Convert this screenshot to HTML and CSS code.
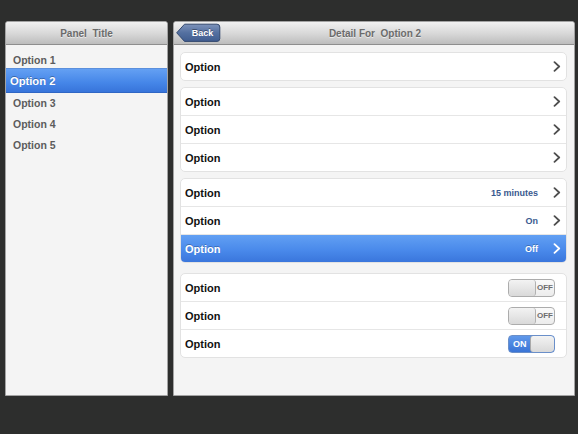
FILE: index.html
```html
<!DOCTYPE html>
<html>
<head>
<meta charset="utf-8">
<link rel="stylesheet" href="styles.css">
</head>
<body>
<div class="app">
  <aside class="panel master">
    <header class="bar">
      <span class="bar-title">Panel  Title</span>
    </header>
    <ul class="menu">
      <li class="menu-item">Option 1</li>
      <li class="menu-item is-selected">Option 2</li>
      <li class="menu-item">Option 3</li>
      <li class="menu-item">Option 4</li>
      <li class="menu-item">Option 5</li>
    </ul>
  </aside>
  <section class="panel detail">
    <header class="bar bar-detail">
      <div class="back">
        <svg class="back-shape" width="45" height="20" viewBox="0 0 45 20">
          <defs>
            <linearGradient id="bg" x1="0" y1="0" x2="0" y2="1">
              <stop offset="0" stop-color="#7d93bb"/>
              <stop offset="0.5" stop-color="#5470a0"/>
              <stop offset="1" stop-color="#405d8f"/>
            </linearGradient>
          </defs>
          <path d="M0.7,9.8 L8.5,1.2 H41 Q43.8,1.2 43.8,4 V15.6 Q43.8,18.4 41,18.4 H8.5 Z" fill="url(#bg)" stroke="#33496f" stroke-width="1"/>
        </svg>
        <span class="back-label">Back</span>
      </div>
      <span class="bar-title">Detail For  Option 2</span>
      <span class="bar-spacer"></span>
    </header>
    <div class="groups">
      <div class="group">
        <div class="row"><span class="row-label">Option</span><svg class="chev" width="8" height="11" viewBox="0 0 8 11"><polyline points="1.5,1.2 6.2,5.5 1.5,9.8"/></svg></div>
      </div>
      <div class="group">
        <div class="row"><span class="row-label">Option</span><svg class="chev" width="8" height="11" viewBox="0 0 8 11"><polyline points="1.5,1.2 6.2,5.5 1.5,9.8"/></svg></div>
        <div class="row"><span class="row-label">Option</span><svg class="chev" width="8" height="11" viewBox="0 0 8 11"><polyline points="1.5,1.2 6.2,5.5 1.5,9.8"/></svg></div>
        <div class="row"><span class="row-label">Option</span><svg class="chev" width="8" height="11" viewBox="0 0 8 11"><polyline points="1.5,1.2 6.2,5.5 1.5,9.8"/></svg></div>
      </div>
      <div class="group">
        <div class="row"><span class="row-label">Option</span><span class="row-value">15 minutes</span><svg class="chev" width="8" height="11" viewBox="0 0 8 11"><polyline points="1.5,1.2 6.2,5.5 1.5,9.8"/></svg></div>
        <div class="row"><span class="row-label">Option</span><span class="row-value">On</span><svg class="chev" width="8" height="11" viewBox="0 0 8 11"><polyline points="1.5,1.2 6.2,5.5 1.5,9.8"/></svg></div>
        <div class="row is-selected"><span class="row-label">Option</span><span class="row-value">Off</span><svg class="chev" width="8" height="11" viewBox="0 0 8 11"><polyline points="1.5,1.2 6.2,5.5 1.5,9.8"/></svg></div>
      </div>
      <div class="group group-switches">
        <div class="row"><span class="row-label">Option</span><div class="switch"><span class="switch-knob"></span><span class="switch-text">OFF</span></div></div>
        <div class="row"><span class="row-label">Option</span><div class="switch"><span class="switch-knob"></span><span class="switch-text">OFF</span></div></div>
        <div class="row"><span class="row-label">Option</span><div class="switch is-on"><span class="switch-text">ON</span><span class="switch-knob"></span></div></div>
      </div>
    </div>
  </section>
</div>
</body>
</html>
```
FILE: styles.css
```css
* { box-sizing: border-box; }
html, body { margin: 0; padding: 0; }
body {
  background: #2d2e2d;
  font-family: "Liberation Sans", Arial, Helvetica, sans-serif;
  width: 578px;
  height: 434px;
  overflow: hidden;
}
.app {
  display: flex;
  gap: 5px;
  padding: 21px 3px 0 5px;
  height: 396px;
}
.panel {
  background: #f4f4f4;
  border: 1px solid #a3a3a3;
  border-radius: 3px 3px 0 0;
  display: flex;
  flex-direction: column;
  overflow: hidden;
}
.master { width: 163px; flex: none; }
.detail { flex: 1; }

.bar {
  height: 23px;
  flex: none;
  background: linear-gradient(#f1f1f1 0%, #d9d9d9 50%, #bdbdbd 100%);
  border-bottom: 1px solid #8e8e8e;
  display: flex;
  align-items: center;
  justify-content: center;
}
.bar-title {
  white-space: pre;
  font-size: 10px;
  font-weight: bold;
  color: #6b6b6b;
  text-shadow: 0 1px 0 rgba(255,255,255,0.6);
}
.bar-detail {
  display: grid;
  grid-template-columns: 1fr auto 1fr;
  padding-left: 2px;
}
.back {
  position: relative;
  width: 45px;
  height: 20px;
  display: flex;
  align-items: center;
  padding-left: 9px;
}
.back-shape { position: absolute; left: 0; top: 0; }
.back-label {
  position: relative;
  width: 35px;
  text-align: center;
  font-size: 9px;
  font-weight: bold;
  color: #fff;
  text-shadow: 0 -1px 0 rgba(0,0,0,0.35);
}

.menu {
  list-style: none;
  margin: 0;
  padding: 5px 0 0;
}
.menu-item {
  height: 21px;
  display: flex;
  align-items: center;
  padding-left: 7px;
  padding-bottom: 2px;
  font-size: 10.5px;
  font-weight: bold;
  color: #5c5c5c;
}
.menu-item.is-selected {
  height: 25px;
  margin-top: -3px;
  padding-left: 4px;
  padding-bottom: 0;
  font-size: 11.2px;
  color: #fff;
  background: linear-gradient(#64a0f3, #4586e8 60%, #3774da);
  border-top: 1px solid #5b8fdc;
  border-bottom: 1px solid #2f66c4;
  text-shadow: 0 -1px 0 rgba(0,0,0,0.3);
}

.groups {
  display: flex;
  flex-direction: column;
  gap: 6px;
  padding: 7px 7px 0 6px;
}
.group {
  background: #fff;
  border: 1px solid #e2e2e2;
  border-radius: 5px;
  overflow: hidden;
}
.group-switches { margin-top: 4px; }
.row {
  height: 28px;
  display: flex;
  align-items: center;
  padding: 0 5px 0 4px;
  border-bottom: 1px solid #e6e6e6;
}
.row:last-child { border-bottom: none; height: 27px; }
.row-label {
  flex: 1;
  font-size: 11px;
  font-weight: bold;
  color: #111;
}
.row-value {
  font-size: 9px;
  font-weight: bold;
  color: #3a5a8f;
  margin-right: 15px;
}
.chev { flex: none; }
.chev polyline {
  fill: none;
  stroke: #4f4f4f;
  stroke-width: 1.8;
  stroke-linecap: round;
  stroke-linejoin: round;
}
.row.is-selected {
  background: linear-gradient(#62a0f3, #4a8aeb 55%, #3a76dc);
}
.row.is-selected .row-label,
.row.is-selected .row-value {
  color: #fff;
  text-shadow: 0 -1px 0 rgba(0,0,0,0.25);
}
.row.is-selected .chev polyline { stroke: #fff; }

.switch {
  width: 47px;
  height: 18px;
  margin-right: 6px;
  border: 1px solid #acacac;
  border-radius: 4px;
  display: flex;
  overflow: hidden;
  background: linear-gradient(#fafafa, #ececec);
}
.switch-knob {
  width: 27px;
  flex: none;
  background: linear-gradient(#f3f3f3, #d9d9d9);
  border-right: 1px solid #b1b1b1;
  border-radius: 3px;
}
.switch-text {
  flex: 1;
  display: flex;
  align-items: center;
  justify-content: center;
  font-size: 8px;
  font-weight: bold;
  color: #6d6d6d;
}
.switch.is-on {
  background: linear-gradient(#5f98ea, #3a74d6);
  border-color: #6a8fc9;
}
.switch.is-on .switch-text {
  color: #fff;
  font-size: 9px;
  justify-content: flex-start;
  padding-left: 4px;
}
.switch.is-on .switch-knob {
  width: 24px;
  border-right: none;
  border-left: 1px solid #a9a9a9;
}
```
